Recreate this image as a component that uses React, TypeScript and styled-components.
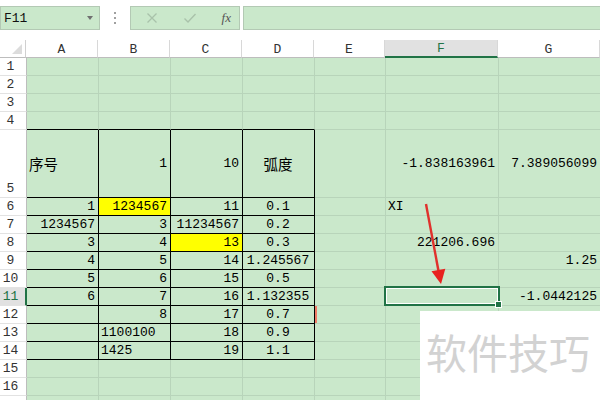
import styled, { createGlobalStyle } from "styled-components";

const GlobalStyle = createGlobalStyle`
  html, body {
    margin: 0;
    padding: 0;
    background: #ffffff;
    overflow: hidden;
  }
  body {
    font-family: "Liberation Mono", "Noto Sans CJK SC", monospace;
  }
`;

const GREEN_BG = "#cae8cb";
const GRID = "#b8d4ba";
const SELECT = "#217346";

type Align = "left" | "right" | "center";

interface CellData {
  t: string;
  a?: Align;
  yellow?: boolean;
  cjk?: boolean;
}

const cols = [
  { name: "A", w: 72 },
  { name: "B", w: 72 },
  { name: "C", w: 72 },
  { name: "D", w: 72 },
  { name: "E", w: 71 },
  { name: "F", w: 113 },
  { name: "G", w: 102 },
];

const rowHeights: Record<number, number> = { 5: 68 };

const data: Record<string, CellData> = {
  A5: { t: "序号", a: "left", cjk: true },
  B5: { t: "1" },
  C5: { t: "10" },
  D5: { t: "弧度", cjk: true },
  F5: { t: "-1.838163961" },
  G5: { t: "7.389056099" },
  A6: { t: "1" },
  B6: { t: "1234567", yellow: true },
  C6: { t: "11" },
  D6: { t: "0.1" },
  F6: { t: "XI", a: "left" },
  A7: { t: "1234567" },
  B7: { t: "3" },
  C7: { t: "11234567" },
  D7: { t: "0.2" },
  A8: { t: "3" },
  B8: { t: "4" },
  C8: { t: "13", yellow: true },
  D8: { t: "0.3" },
  F8: { t: "221206.696" },
  A9: { t: "4" },
  B9: { t: "5" },
  C9: { t: "14" },
  D9: { t: "1.245567" },
  G9: { t: "1.25" },
  A10: { t: "5" },
  B10: { t: "6" },
  C10: { t: "15" },
  D10: { t: "0.5" },
  A11: { t: "6" },
  B11: { t: "7" },
  C11: { t: "16" },
  D11: { t: "1.132355" },
  G11: { t: "-1.0442125" },
  B12: { t: "8" },
  C12: { t: "17" },
  D12: { t: "0.7" },
  B13: { t: "1100100", a: "left" },
  C13: { t: "18" },
  D13: { t: "0.9" },
  B14: { t: "1425", a: "left" },
  C14: { t: "19" },
  D14: { t: "1.1" },
};

const Page = styled.div`
  position: relative;
  width: 600px;
  height: 400px;
  overflow: hidden;
  background: #ffffff;
`;

const Toolbar = styled.div`
  display: flex;
  align-items: center;
  height: 24px;
  padding: 6px 0 10px 0;
`;

const NameBox = styled.div`
  position: relative;
  box-sizing: border-box;
  width: 100px;
  height: 24px;
  background: ${GREEN_BG};
  border: 1px solid #b3c9b4;
  display: flex;
  align-items: center;
  padding-left: 3px;
  font-size: 13px;
  color: #111;
`;

const DropArrow = styled.div`
  position: absolute;
  right: 6px;
  top: 9px;
  width: 0;
  height: 0;
  border-left: 3.5px solid transparent;
  border-right: 3.5px solid transparent;
  border-top: 4px solid #707070;
`;

const Dots = styled.div`
  width: 30px;
  display: flex;
  flex-direction: column;
  align-items: center;
  gap: 3px;
`;

const Dot = styled.span`
  width: 2px;
  height: 2px;
  background: #a0a0a0;
`;

const FxBox = styled.div`
  box-sizing: border-box;
  width: 110px;
  height: 24px;
  background: ${GREEN_BG};
  border: 1px solid #b3c9b4;
  display: flex;
  align-items: center;
  justify-content: space-between;
  padding: 0 8px 0 15px;
`;

const FormulaBar = styled.div`
  box-sizing: border-box;
  flex: 1;
  height: 24px;
  margin-left: 3px;
  background: ${GREEN_BG};
  border: 1px solid #b3c9b4;
  border-right: none;
`;

const Fx = styled.span`
  font-family: "Liberation Serif", serif;
  font-style: italic;
  font-size: 13px;
  color: #555;
`;

const Sheet = styled.div`
  display: flex;
  flex-direction: column;
`;

const Row = styled.div<{ $h: number }>`
  display: flex;
  height: ${(p) => p.$h}px;
`;

const Corner = styled.div`
  position: relative;
  box-sizing: border-box;
  width: 27px;
  border-right: 1px solid #d0d0d0;
  border-bottom: 1px solid #bdbdbd;
  background: #ffffff;
`;

const CornerTri = styled.div`
  position: absolute;
  right: 3px;
  bottom: 3px;
  width: 0;
  height: 0;
  border-left: 10px solid transparent;
  border-bottom: 10px solid #dcdcdc;
`;

const ColHead = styled.div<{ $w: number; $active?: boolean }>`
  box-sizing: border-box;
  width: ${(p) => p.$w}px;
  flex-shrink: 0;
  display: flex;
  align-items: center;
  justify-content: center;
  font-size: 13px;
  padding-top: 1px;
  color: ${(p) => (p.$active ? SELECT : "#333")};
  background: ${(p) => (p.$active ? "#e1e1e1" : "#ffffff")};
  border-right: 1px solid #d8d8d8;
  border-bottom: ${(p) => (p.$active ? `2px solid ${SELECT}` : "1px solid #bdbdbd")};
`;

const RowHead = styled.div<{ $active?: boolean }>`
  box-sizing: border-box;
  width: 27px;
  flex-shrink: 0;
  display: flex;
  align-items: flex-end;
  padding-left: 2px;
  font-size: 13px;
  line-height: 17px;
  color: ${(p) => (p.$active ? SELECT : "#333")};
  background: ${(p) => (p.$active ? "#e1e1e1" : "#ffffff")};
  border-right: ${(p) => (p.$active ? `2px solid ${SELECT}` : "1px solid #bdbdbd")};
  border-bottom: 1px solid #e2e2e2;
`;

const RowNum = styled.span`
  width: 17px;
  text-align: center;
`;

const Cell = styled.div<{
  $w: number;
  $align: Align;
  $yellow?: boolean;
  $br: string;
  $bb: string;
  $cjk?: boolean;
}>`
  position: relative;
  box-sizing: border-box;
  width: ${(p) => p.$w}px;
  flex-shrink: 0;
  display: flex;
  align-items: center;
  justify-content: ${(p) =>
    p.$align === "left" ? "flex-start" : p.$align === "center" ? "center" : "flex-end"};
  padding: 0 3px 0 2px;
  background: ${(p) => (p.$yellow ? "#ffff00" : GREEN_BG)};
  border-right: 1px solid ${(p) => p.$br};
  border-bottom: 1px solid ${(p) => p.$bb};
  font-family: ${(p) =>
    p.$cjk ? `"Noto Sans CJK SC", sans-serif` : `"Liberation Mono", monospace`};
  font-size: ${(p) => (p.$cjk ? "14.5px" : "13px")};
  color: #000;
  white-space: nowrap;
`;

const Selection = styled.div`
  position: absolute;
  left: -2px;
  top: -2px;
  width: 116px;
  height: 20px;
  box-sizing: border-box;
  border: 2px solid ${SELECT};
  box-shadow: inset 0 0 0 1px #ffffff;
  z-index: 2;
`;

const Handle = styled.div`
  position: absolute;
  left: 109px;
  top: 13px;
  width: 7px;
  height: 7px;
  box-sizing: border-box;
  background: ${SELECT};
  border: 1px solid #ffffff;
`;

const RedMark = styled.div`
  position: absolute;
  left: 0;
  top: 0;
  width: 2px;
  height: 17px;
  background: #f07a66;
`;

const Overlay = styled.svg`
  position: absolute;
  left: 0;
  top: 0;
  pointer-events: none;
  z-index: 5;
`;

const Watermark = styled.div`
  position: absolute;
  left: 420px;
  top: 311px;
  width: 180px;
  height: 89px;
  background: #ffffff;
  z-index: 4;
  box-sizing: border-box;
  padding: 16px 0 0 6px;
  font-family: "Noto Sans CJK SC", sans-serif;
  font-size: 41px;
  line-height: 48px;
  color: #d2d2d2;
  white-space: nowrap;
`;

const tableCols = ["A", "B", "C", "D"];

function borderFor(col: string, row: number) {
  const inTable = tableCols.includes(col) && row >= 5 && row <= 14;
  const right = inTable ? "#000" : GRID;
  const bottom = inTable || (tableCols.includes(col) && row === 4) ? "#000" : GRID;
  return { right, bottom };
}

export default function App() {
  // row 17 only peeks in at the bottom edge, its number stays below the fold
  const rows = Array.from({ length: 17 }, (_, i) => i + 1);
  return (
    <Page>
      <GlobalStyle />
      <Toolbar>
        <NameBox>
          F11
          <DropArrow />
        </NameBox>
        <Dots>
          <Dot />
          <Dot />
          <Dot />
        </Dots>
        <FxBox>
          <svg width="12" height="12" viewBox="0 0 12 12">
            <path d="M1.5 1.5 L10.5 10.5 M10.5 1.5 L1.5 10.5" stroke="#a9c2aa" strokeWidth="1.3" />
          </svg>
          <svg width="14" height="12" viewBox="0 0 14 12">
            <path d="M1.5 6.5 L5 10 L12.5 2" stroke="#a9c2aa" strokeWidth="1.4" fill="none" />
          </svg>
          <Fx>fx</Fx>
        </FxBox>
        <FormulaBar />
      </Toolbar>
      <Sheet>
        <Row $h={18}>
          <Corner>
            <CornerTri />
          </Corner>
          {cols.map((c) => (
            <ColHead key={c.name} $w={c.w} $active={c.name === "F"}>
              {c.name}
            </ColHead>
          ))}
        </Row>
        {rows.map((r) => (
          <Row key={r} $h={rowHeights[r] ?? 18}>
            <RowHead $active={r === 11}>
              <RowNum>{r < 17 ? r : ""}</RowNum>
            </RowHead>
            {cols.map((c) => {
              const key = `${c.name}${r}`;
              const d = data[key];
              const b = borderFor(c.name, r);
              const align: Align = d?.a ?? (c.name === "D" ? "center" : "right");
              return (
                <Cell
                  key={key}
                  $w={c.w}
                  $align={align}
                  $yellow={d?.yellow}
                  $cjk={d?.cjk}
                  $br={b.right}
                  $bb={b.bottom}
                >
                  {d?.t}
                  {key === "F11" && (
                    <Selection>
                      <Handle />
                    </Selection>
                  )}
                  {key === "E12" && <RedMark />}
                </Cell>
              );
            })}
          </Row>
        ))}
      </Sheet>
      <Overlay width="600" height="400" viewBox="0 0 600 400">
        <line x1="426" y1="204" x2="438.5" y2="271" stroke="#e0312c" strokeWidth="2.4" />
        <polygon points="431.5,271.3 445.3,268.7 441,284" fill="#e8221f" />
      </Overlay>
      <Watermark>软件技巧</Watermark>
    </Page>
  );
}
